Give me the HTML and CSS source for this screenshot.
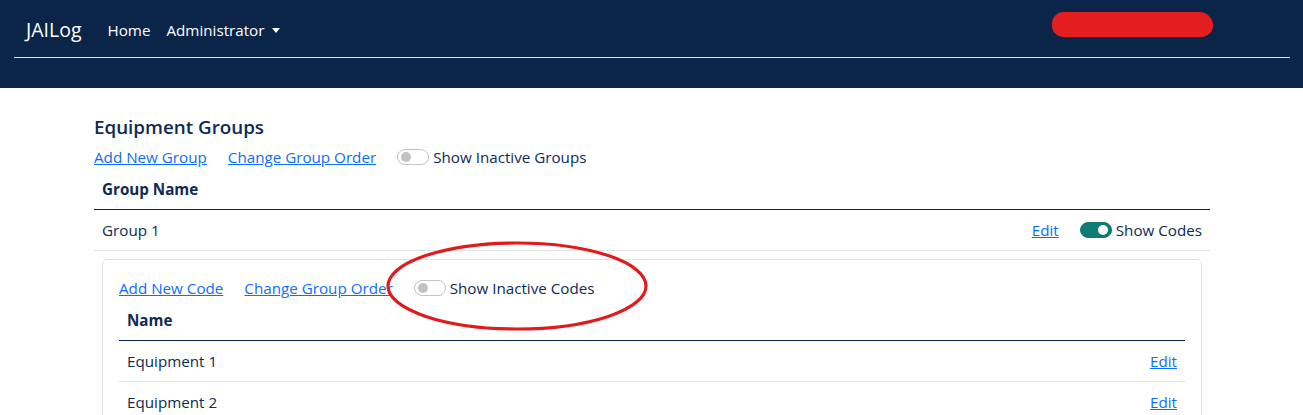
FILE: index.html
```html
<!DOCTYPE html>
<html lang="en">
<head>
<meta charset="utf-8">
<title>JAILog - Equipment Groups</title>
<link rel="stylesheet" href="styles.css">
</head>
<body>
<div class="page">
  <nav class="navbar">
    <div class="nav-top">
      <a class="brand" href="#">JAILog</a>
      <ul class="nav-links">
        <li><a href="#">Home</a></li>
        <li><a href="#" class="dropdown">Administrator<span class="caret"></span></a></li>
      </ul>
      <div class="redact"></div>
    </div>
    <div class="nav-rule"></div>
  </nav>

  <main class="container">
    <h4 class="title">Equipment Groups</h4>
    <div class="actions">
      <a href="#">Add New Group</a>
      <a href="#">Change Group Order</a>
      <label class="switch"><span class="toggle"></span>Show Inactive Groups</label>
    </div>
    <table class="grid">
      <thead>
        <tr><th>Group Name</th><th></th></tr>
      </thead>
      <tbody>
        <tr>
          <td>Group 1</td>
          <td class="right">
            <div class="row-tools">
              <a href="#">Edit</a>
              <label class="switch"><span class="toggle on"></span>Show Codes</label>
            </div>
          </td>
        </tr>
        <tr class="nested">
          <td colspan="2">
            <div class="card">
              <div class="actions">
                <a href="#">Add New Code</a>
                <a href="#">Change Group Order</a>
                <label class="switch"><span class="toggle"></span>Show Inactive Codes</label>
              </div>
              <table class="grid inner">
                <thead>
                  <tr><th>Name</th><th></th></tr>
                </thead>
                <tbody>
                  <tr><td>Equipment 1</td><td class="right"><a href="#">Edit</a></td></tr>
                  <tr><td>Equipment 2</td><td class="right"><a href="#">Edit</a></td></tr>
                </tbody>
              </table>
            </div>
          </td>
        </tr>
      </tbody>
    </table>
  </main>

  <svg class="annotation" width="280" height="100" viewBox="0 0 280 100">
    <ellipse cx="139" cy="48" rx="129" ry="43" fill="none" stroke="#e01b1b" stroke-width="3.2"/>
  </svg>
</div>
</body>
</html>
```

FILE: styles.css
```css
* { box-sizing: border-box; }

html, body {
  margin: 0;
  padding: 0;
}

body {
  font-family: "Open Sans", "Noto Sans", "Liberation Sans", sans-serif;
  font-size: 15.2px;
  line-height: 24px;
  color: #0e2a55;
  background: #ffffff;
}

.page {
  position: relative;
  overflow: hidden;
  height: 415px;
}

a { color: #0d6efd; text-decoration: underline; }

/* Navbar */
.navbar {
  background: #0b2548;
  height: 88px;
  padding: 0 13px 0 14px;
}

.nav-top {
  display: flex;
  align-items: center;
  height: 57px;
  padding-left: 12px;
  padding-top: 3px;
}

.brand {
  color: #ffffff;
  text-decoration: none;
  font-size: 19.5px;
  margin-right: 26px;
}

.nav-links {
  display: flex;
  list-style: none;
  margin: 0;
  padding: 0;
  gap: 16px;
}

.nav-links a {
  color: #ffffff;
  text-decoration: none;
  font-size: 15.2px;
}

.caret {
  display: inline-block;
  margin-left: 8px;
  vertical-align: 3px;
  border-top: 5px solid #ffffff;
  border-left: 4.5px solid transparent;
  border-right: 4.5px solid transparent;
}

.redact {
  margin-left: auto;
  margin-right: 77px;
  width: 161px;
  height: 25px;
  margin-top: -11px;
  border-radius: 12px 14px 12px 12px;
  background: #e41e1e;
}

.nav-rule {
  height: 1px;
  background: #dfe4ec;
}

/* Content */
.container {
  width: 1116px;
  margin: 0 auto;
  padding-top: 27px;
  position: relative;
  left: 0.5px;
}

.title {
  margin: 0 0 6px;
  font-size: 18.8px;
  line-height: 24px;
  font-weight: 600;
  color: #0e2a55;
}

.actions {
  display: flex;
  align-items: center;
  gap: 21px;
}

.switch {
  display: inline-flex;
  align-items: center;
  gap: 4px;
  color: #0e2a55;
}

.toggle {
  position: relative;
  width: 32px;
  height: 16px;
  border: 1px solid #c4c4c4;
  border-radius: 8px;
  background: #ffffff;
}

.toggle::after {
  content: "";
  position: absolute;
  left: 3px;
  top: 2px;
  width: 10px;
  height: 10px;
  border-radius: 50%;
  background: #c2c2c2;
}

.toggle.on {
  background: #0e7b74;
  border-color: #0e7b74;
}

.toggle.on::after {
  left: auto;
  right: 3px;
  background: #ffffff;
}

.grid {
  width: 100%;
  border-collapse: collapse;
}

.grid th,
.grid td {
  padding: 8px;
  text-align: left;
  line-height: 24px;
}

.grid th {
  font-weight: 700;
  color: #0e2a55;
  border-bottom: 1px solid #0b2548;
}

.grid td {
  border-bottom: 1px solid #dee2e6;
}

.grid td.right {
  text-align: right;
}

.row-tools {
  display: flex;
  justify-content: flex-end;
  align-items: center;
  gap: 21px;
}

.nested > td {
  border-bottom: none;
  padding-top: 8px;
}

.card {
  border: 1px solid #dee2e6;
  border-radius: 5px;
  padding: 16px;
}

.annotation {
  position: absolute;
  left: 378px;
  top: 238px;
}
```
